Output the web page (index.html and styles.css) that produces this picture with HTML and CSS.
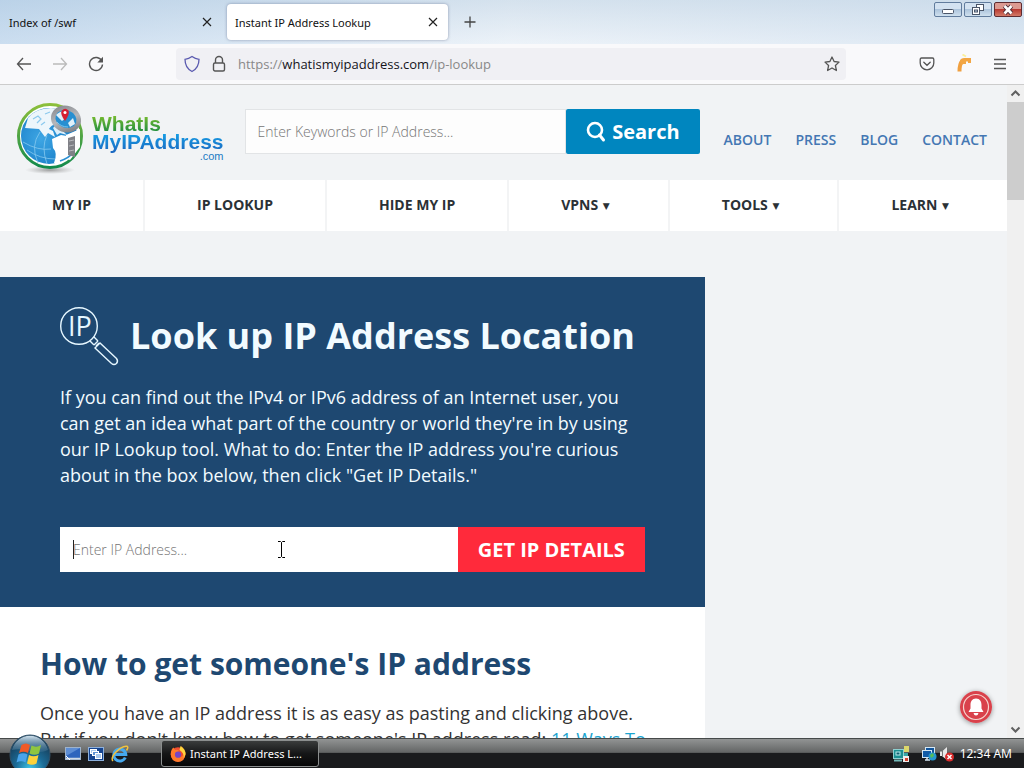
FILE: index.html
```html
<!DOCTYPE html>
<html lang="en">
<head>
    <meta charset="UTF-8">
    <meta name="viewport" content="width=device-width, initial-scale=1.0">
    <title>Instant IP Address Lookup</title>
    <link rel="stylesheet" href="styles.css">
</head>
<body>

    <!-- Tab strip -->
    <div class="tab-strip">
        <div class="tab">
            <span class="tab-title">Index of /swf</span>
            <button class="icon-btn tab-close" aria-label="Close tab">
                <svg width="10" height="10" viewBox="0 0 10 10"><path d="M1 1L9 9M9 1L1 9" stroke="#222" stroke-width="1.2"/></svg>
            </button>
        </div>
        <div class="tab active">
            <span class="tab-title">Instant IP Address Lookup</span>
            <button class="icon-btn tab-close" aria-label="Close tab">
                <svg width="10" height="10" viewBox="0 0 10 10"><path d="M1 1L9 9M9 1L1 9" stroke="#222" stroke-width="1.2"/></svg>
            </button>
        </div>
        <button class="icon-btn new-tab" aria-label="New tab">
            <svg width="12" height="12" viewBox="0 0 12 12"><path d="M6 .5V11.500M.5 6H11.500" stroke="#444" stroke-width="1.3"/></svg>
        </button>
        <div class="window-buttons">
            <button class="win-btn" aria-label="Minimize">
                <svg width="26" height="13" viewBox="0 0 26 13"><rect x="7.500" y="6.500" width="11" height="4" rx="1" fill="#fff" stroke="#4a5568"/></svg>
            </button>
            <button class="win-btn" aria-label="Restore">
                <svg width="26" height="13" viewBox="0 0 26 13"><rect x="11.500" y="1.500" width="7" height="6" fill="#fff" stroke="#4a5568"/><rect x="7.500" y="4.500" width="7" height="7" fill="#fff" stroke="#4a5568"/><rect x="9.500" y="7" width="3" height="2" fill="#b8cde2" stroke="#4a5568"/></svg>
            </button>
            <button class="win-btn win-close" aria-label="Close">
                <svg width="26" height="13" viewBox="0 0 26 13"><path d="M9.500 3L16.500 10.500M16.500 3L9.500 10.500" stroke="#4a2a35" stroke-width="4.500"/><path d="M9.500 3L16.500 10.500M16.500 3L9.500 10.500" stroke="#fff" stroke-width="2.600"/></svg>
            </button>
        </div>
    </div>

    <!-- Browser toolbar -->
    <div class="toolbar">
        <div class="nav-buttons">
            <button class="icon-btn" aria-label="Back">
                <svg width="16" height="16" viewBox="0 0 16 16"><path d="M15 8H1.500M7 2L1.500 8L7 14" fill="none" stroke="#555" stroke-width="1.300"/></svg>
            </button>
            <button class="icon-btn" aria-label="Forward">
                <svg width="16" height="16" viewBox="0 0 16 16"><path d="M1 8H14.500M9 2L14.500 8L9 14" fill="none" stroke="#bbb" stroke-width="1.300"/></svg>
            </button>
            <button class="icon-btn" aria-label="Reload">
                <svg width="16" height="16" viewBox="0 0 16 16"><path d="M13.800 5A6.500 6.500 0 1 0 14.500 8.500" fill="none" stroke="#555" stroke-width="1.400"/><path d="M15 .8V6.500H9.300Z" fill="#555"/></svg>
            </button>
        </div>
        <div class="url-bar">
            <svg width="16" height="18" viewBox="0 0 16 18"><path d="M8 1.500C10 3 12 4 15 4.300C15 10 13 14 8 16.500C3 14 1 10 1 4.300C4 4 6 3 8 1.500Z" fill="none" stroke="#5b5bb0" stroke-width="1.300"/></svg>
            <svg width="14" height="18" viewBox="0 0 14 18"><rect x="1.500" y="8" width="11" height="8" rx="1.500" fill="none" stroke="#555" stroke-width="1.400"/><path d="M3.500 8V5A3.500 3.500 0 0 1 10.500 5V8" fill="none" stroke="#555" stroke-width="1.400"/></svg>
            <span class="url">https://<b>whatismyipaddress.com</b>/ip-lookup</span>
            <svg width="16" height="16" viewBox="0 0 16 16"><path d="M8 1L10.100 5.500L15 6.100L11.400 9.500L12.400 14.500L8 12L3.600 14.500L4.600 9.500L1 6.100L5.900 5.500Z" fill="none" stroke="#555" stroke-width="1.300" stroke-linejoin="round"/></svg>
        </div>
        <div class="tool-icons">
            <button class="icon-btn" aria-label="Pocket">
                <svg width="16" height="16" viewBox="0 0 16 16"><path d="M2.500 2H13.500Q14.800 2 14.800 3.500V7A6.800 6.800 0 0 1 1.200 7V3.500Q1.200 2 2.500 2Z" fill="none" stroke="#555" stroke-width="1.300"/><path d="M4.800 6.200L8 9.300L11.200 6.200" fill="none" stroke="#555" stroke-width="1.300" stroke-linecap="round"/></svg>
            </button>
            <button class="icon-btn" aria-label="Extension">
                <svg width="16" height="20" viewBox="0 0 16 20"><path d="M3.500 17.500C3.500 13 4 9.500 6 7.500" fill="none" stroke="#f0a040" stroke-width="4"/><path d="M4 6Q6 3.500 9 4H15V9H12V7.500H10V10H7.500L5 11Z" fill="#f2a644"/><path d="M6.500 .5L10 2.500" stroke="#fbf09c" stroke-width="2"/></svg>
            </button>
            <button class="icon-btn" aria-label="Menu">
                <svg width="14" height="14" viewBox="0 0 14 14"><path d="M1 2.500H13M1 7H13M1 11.500H13" stroke="#555" stroke-width="1.300"/></svg>
            </button>
        </div>
    </div>

    <!-- Page -->
    <div class="viewport">
        <div class="page">
            <header class="site-header">
                <a class="logo" href="#">
                    <svg width="70" height="74" viewBox="0 0 70 74">
                        <defs>
                            <linearGradient id="ring" x1="0" y1="0" x2="0" y2="1"><stop offset="0" stop-color="#8cbf3b"/><stop offset="1" stop-color="#128a4c"/></linearGradient>
                            <radialGradient id="sea" cx=".35" cy=".55" r=".65"><stop offset="0" stop-color="#3ea6e4"/><stop offset="1" stop-color="#1479c4"/></radialGradient>
                            <linearGradient id="steel" x1="0" y1="0" x2="1" y2="1"><stop offset="0" stop-color="#85878c"/><stop offset=".5" stop-color="#b5b7bb"/><stop offset="1" stop-color="#77797e"/></linearGradient>
                            <radialGradient id="shade"><stop offset="0" stop-color="#777" stop-opacity=".7"/><stop offset="1" stop-color="#999" stop-opacity="0"/></radialGradient>
                        </defs>
                        <ellipse cx="34" cy="68" rx="25" ry="4" fill="url(#shade)"/>
                        <circle cx="34" cy="34" r="31.500" fill="#fff" stroke="url(#ring)" stroke-width="3"/>
                        <circle cx="33" cy="34" r="28" fill="url(#sea)"/>
                        <path d="M12 16Q20 6 35 6Q43 6 50 12L40 22Q35 23 33 27L37 29L39 35L32 31L29 35L23 27L9 26Z" fill="#edf6fb"/>
                        <path d="M17 17L22 14L25 17L21 21M29 12L34 10M25 23L29 20" fill="none" stroke="#8ccaee" stroke-width="1.200"/>
                        <path d="M37 26L41 22L47 29L51 33L44 31L41 33Z" fill="#dceffa"/>
                        <path d="M36 37L45 33L51 34V56L44 62L38 61Q42 51 37 46Z" fill="#fff"/>
                        <path d="M50 33L64 27V45L54 58L48 56Z" fill="#fff"/>
                        <path d="M44 59Q53 56 58 50" fill="none" stroke="#2a8fd2" stroke-width="1.800"/>
                        <path d="M7 40Q22 49 35 47M11 48Q24 57 39 57M22 61Q14 44 24 30M31 62Q25 45 31 33" fill="none" stroke="#86c9ef" stroke-width=".8"/>
                        <path d="M52 36L59 34V55L52 53Z" fill="#808187"/>
                        <path d="M53 39L58 38M53 44L58 43M53 49L58 48" stroke="#b8b9bd"/>
                        <ellipse cx="50" cy="17" rx="13" ry="11" fill="#278fd1" stroke="url(#steel)" stroke-width="4.500" transform="rotate(20 50 17)"/>
                        <path d="M40 13Q44 9 49 9L51 15L46 19ZM52 21L57 16L59 22L54 25Z" fill="#e1f1fa"/>
                        <path d="M41 20Q45 25 52 25" fill="none" stroke="#79c3ec"/>
                        <path d="M49 19Q44 12 45.500 9Q49 5 52.500 8.500Q54 12 49 19Z" fill="#d51f32"/>
                        <circle cx="49" cy="10.500" r="1.500" fill="#fff"/>
                    </svg>
                    <span class="logo-text">
                        <span class="logo-top">WhatIs</span>
                        <span class="logo-bottom">MyIPAddress</span>
                        <span class="logo-com">.com</span>
                    </span>
                </a>
                <form class="site-search">
                    <input type="text" aria-label="Search" placeholder="Enter Keywords or IP Address...">
                    <button type="button">
                        <svg width="20" height="22" viewBox="0 0 20 22"><circle cx="9" cy="9" r="7" fill="none" stroke="#fff" stroke-width="2.600"/><path d="M13.500 14L17.500 19" stroke="#fff" stroke-width="3" stroke-linecap="round"/></svg>
                        Search
                    </button>
                </form>
                <div class="top-links">
                    <a href="#">ABOUT</a>
                    <a href="#">PRESS</a>
                    <a href="#">BLOG</a>
                    <a href="#">CONTACT</a>
                </div>
            </header>

            <nav class="main-nav">
                <a href="#">MY IP</a>
                <a href="#">IP LOOKUP</a>
                <a href="#">HIDE MY IP</a>
                <a href="#">VPNS <span class="arrow">▼</span></a>
                <a href="#">TOOLS <span class="arrow">▼</span></a>
                <a href="#">LEARN <span class="arrow">▼</span></a>
            </nav>

            <main class="content">
                <section class="hero">
                    <div class="hero-title">
                        <svg width="60" height="60" viewBox="0 0 60 60" fill="none" stroke="#e6f7ff" stroke-width="1.400">
                            <circle cx="19" cy="19" r="18.300"/>
                            <path d="M34 30L38 34M30 34L34 38M34 38L38 34M36 39L39 36"/>
                            <path d="M35 41L40 36L56.500 51.500Q58.500 54 56.500 56.500Q54 58.500 51.500 56.500Z"/>
                            <text x="8" y="29" class="ip-mark">IP</text>
                        </svg>
                        <h1>Look up IP Address Location</h1>
                    </div>
                    <p>If you can find out the IPv4 or IPv6 address of an Internet user, you can get an idea what part of the country or world they're in by using our IP Lookup tool. What to do: Enter the IP address you're curious about in the box below, then click "Get IP Details."</p>
                    <form class="ip-form">
                        <div class="ip-field">
                            <input type="text" aria-label="IP address" placeholder="Enter IP Address...">
                            <span class="caret"></span>
                            <svg class="pointer" width="9" height="17" viewBox="0 0 9 17"><path d="M1 .5H3.500L4.500 1.500L5.500 .5H8M4.500 1.500V15.500M1 16.500H3.500L4.500 15.500L5.500 16.500H8" fill="none" stroke="#000"/></svg>
                        </div>
                        <button type="button">GET IP DETAILS</button>
                    </form>
                </section>
                <section class="article">
                    <h2>How to get someone's IP address</h2>
                    <p>Once you have an IP address it is as easy as pasting and clicking above. But if you don't know how to get someone's IP address read: <a href="#">11 Ways To</a></p>
                </section>
            </main>
        </div>
        <button class="bell" aria-label="Notifications">
            <svg width="32" height="32" viewBox="0 0 32 32"><circle cx="16" cy="16" r="16" fill="#d9414b"/><circle cx="16" cy="16" r="12.500" fill="none" stroke="#f6d5cf" stroke-width="1.200"/><path d="M16 7.500C20 7.500 21.500 10.500 21.500 14V17.500L23.500 21H8.500L10.500 17.500V14C10.500 10.500 12 7.500 16 7.500Z" fill="#fff"/><path d="M13.500 22H18.500Q18 24.500 16 24.500Q14 24.500 13.500 22Z" fill="#fff"/></svg>
        </button>
        <div class="scrollbar">
            <svg width="17" height="17" viewBox="0 0 17 17"><path d="M4.500 10.500L8.500 6.500L12.500 10.500" fill="none" stroke="#606060" stroke-width="2"/></svg>
            <div class="thumb"></div>
            <svg class="scroll-down" width="17" height="17" viewBox="0 0 17 17"><path d="M4.500 6.500L8.500 10.500L12.500 6.500" fill="none" stroke="#606060" stroke-width="2"/></svg>
        </div>
    </div>

    <!-- Taskbar -->
    <div class="taskbar">
        <button class="icon-btn start" aria-label="Start">
            <svg width="44" height="42" viewBox="0 0 44 42">
                <defs>
                    <radialGradient id="orb" cx=".5" cy=".85" r=".8"><stop offset="0" stop-color="#3fc6e8"/><stop offset=".45" stop-color="#1c6b96"/><stop offset="1" stop-color="#15364f"/></radialGradient>
                    <linearGradient id="gloss" x1="0" y1="0" x2="0" y2="1"><stop offset="0" stop-color="#d0e2ee"/><stop offset="1" stop-color="#4d7c9c" stop-opacity=".3"/></linearGradient>
                </defs>
                <circle cx="22" cy="21" r="20" fill="url(#orb)" stroke="#31526a"/>
                <path d="M4 16A18.500 18.500 0 0 1 40 16Q31 20 22 17Q12 14 4 16Z" fill="url(#gloss)"/>
                <path d="M13.500 11Q18 8 22 11L20 19Q15.500 16.500 11 19Z" fill="#ee5a28"/>
                <path d="M23.500 11.500Q28.500 14 33 11L31 19.500Q26.500 22 21.500 19.500Z" fill="#8fc640"/>
                <path d="M10.500 20.500Q15 18 19.500 20.500L17.500 28.500Q13 26 8.500 28.500Z" fill="#49a4ea"/>
                <path d="M21 21Q25.500 23.500 30.500 21L28.500 29.500Q24 32 19 29.500Z" fill="#fdd23a"/>
            </svg>
        </button>
        <div class="quick-launch">
            <button class="icon-btn" aria-label="Show desktop">
                <svg width="16" height="14" viewBox="0 0 16 14"><rect x=".5" y=".5" width="15" height="12" fill="#2f65bd" stroke="#9fb3cb"/><path d="M1 1H15L1 9Z" fill="#5d8dd4"/><path d="M1 11.500H15" stroke="#cfd9e6" stroke-width="1.500"/><path d="M1 9L5 13" stroke="#fff"/></svg>
            </button>
            <button class="icon-btn" aria-label="Switch windows">
                <svg width="16" height="14" viewBox="0 0 16 14"><rect x=".5" y=".5" width="15" height="13" fill="#16448f" stroke="#8db0dc"/><rect x="2.500" y="2.500" width="6" height="4" fill="#a9c8ee" stroke="#fff"/><rect x="4.500" y="4.500" width="6" height="4" fill="#5f93d6" stroke="#fff"/><rect x="7.500" y="6.500" width="6" height="5" fill="#a9c8ee" stroke="#fff"/></svg>
            </button>
            <button class="icon-btn" aria-label="Internet Explorer">
                <svg width="18" height="18" viewBox="0 0 18 18"><path d="M14.300 12.500A6 6 0 1 1 14.800 9.500H4" fill="none" stroke="#46a9ee" stroke-width="3"/><path d="M2 16Q-.5 13.500 4.500 7.500Q11 .5 16 1.300Q17.800 2 15.500 5.500" fill="none" stroke="#f2c33c" stroke-width="1.500"/></svg>
            </button>
        </div>
        <button class="task">
            <svg width="16" height="16" viewBox="0 0 16 16"><circle cx="8" cy="8.500" r="7.300" fill="#f04d32"/><path d="M.8 8Q1 3 3.500 1.500L5 4Q8 3 9 5L6 7.500Q7 12 11 11Q15 9 12 4L11 0Q15 3 15.500 8Q15 15 8 16Q1 15 .8 8Z" fill="#ff7a2a"/><circle cx="8" cy="8.700" r="3.100" fill="#7446c5"/><path d="M10.500 0Q15.500 3 15.500 8Q15 10.500 13.500 12Q14.500 7 9.500 4Z" fill="#ffd53d"/></svg>
            <span>Instant IP Address L...</span>
        </button>
        <div class="tray">
            <svg width="16" height="16" viewBox="0 0 16 16"><rect x=".5" y="3.500" width="10" height="9" fill="#1b8f91" stroke="#8ed0d0"/><rect x="3" y="6" width="4" height="3" fill="#0c5f70" stroke="#b9ecec"/><path d="M1 14.500H9" stroke="#72b8b8" stroke-width="2"/><rect x="11" y="0" width="5" height="6" fill="#dcd76b"/><rect x="11" y="7" width="4" height="3" fill="#36a6a6"/><rect x="10" y="10" width="6" height="6" fill="#eee"/><rect x="12" y="12" width="3" height="3" fill="#d5422f"/></svg>
            <div class="tray-pair">
                <svg width="16" height="16" viewBox="0 0 16 16"><rect x="4.500" y="1.500" width="9" height="8" fill="#11549c" stroke="#d5e8f5"/><rect x="1.500" y="4.500" width="9" height="7" fill="#125ca7" stroke="#d5e8f5"/><path d="M4 14H9M6 12V14" stroke="#d5e8f5" stroke-width="1.500"/><circle cx="11.500" cy="10.500" r="4" fill="#2598cf"/><path d="M9 9L12 7L13 10L10 12ZM13 12L15 11" fill="#56bd56"/></svg>
                <svg width="16" height="16" viewBox="0 0 16 16"><path d="M1 5.500H3L8 1V14L3 10H1Z" fill="#e8e8e8"/><path d="M3.500 5V10.500" stroke="#777"/><circle cx="10.500" cy="11" r="4.500" fill="#d92c2c"/><path d="M8.500 9L12.500 13M12.500 9L8.500 13" stroke="#fff" stroke-width="1.500"/></svg>
            </div>
            <span class="clock">12:34 AM</span>
        </div>
    </div>

</body>
</html>
```
FILE: styles.css
```css
/* General styles */
* {
    box-sizing: border-box;
}

body {
    margin: 0;
    height: 100vh;
    display: flex;
    flex-direction: column;
    overflow: hidden;
    font-family: "Open Sans", sans-serif;
    background-color: #f1f3f5;
}

a {
    text-decoration: none;
}

svg {
    display: block;
    flex: none;
}

button, input {
    font-family: inherit;
}

.icon-btn {
    padding: 0;
    border: none;
    background: none;
}

/* Tab strip */
.tab-strip {
    flex: none;
    display: flex;
    align-items: center;
    height: 44px;
    padding-left: 1px;
    background: linear-gradient(to right, rgba(170, 201, 231, 0.5), rgba(236, 242, 248, 0.3) 50%, rgba(205, 221, 237, 0.5)), linear-gradient(#cbdbe9, #edf3f9);
    font-family: "Noto Sans", sans-serif;
    font-size: 11px;
    color: #111;
}

.tab {
    display: flex;
    align-items: center;
    justify-content: space-between;
    width: 221px;
    height: 36px;
    padding: 0 10px 0 8px;
    border-radius: 4px;
}

.tab.active {
    background-color: #fff;
    box-shadow: 0 0 3px rgba(60, 70, 110, 0.5);
    margin-left: 5px;
}

.new-tab {
    margin-left: 16px;
}

.window-buttons {
    display: flex;
    gap: 2px;
    margin-left: auto;
    padding: 2px 2px 0 0;
    align-self: flex-start;
}

.win-btn {
    padding: 0;
    width: 28px;
    height: 15px;
    border: 1px solid #617c9d;
    border-radius: 2px;
    background: linear-gradient(#d3e2f1 45%, #acc4dc 50%, #cfe0ee);
}

.win-close {
    border-color: #5e2c31;
    background: linear-gradient(#dc9a91 45%, #b93b32 50%, #d37a68);
}

/* Toolbar */
.toolbar {
    flex: none;
    display: flex;
    align-items: center;
    height: 41px;
    background-color: #f9f9fb;
    border-bottom: 1px solid #ccc;
}

.nav-buttons {
    display: flex;
    gap: 20px;
    padding: 0 72px 0 16px;
}

.url-bar {
    flex: 1;
    display: flex;
    align-items: center;
    gap: 12px;
    height: 32px;
    padding: 0 6px 0 8px;
    border-radius: 4px;
    background-color: #f0f0f4;
}

.url {
    flex: 1;
    font-size: 13px;
    color: #888;
}

.url b {
    font-weight: normal;
    color: #15141a;
}

.tool-icons {
    display: flex;
    align-items: center;
    gap: 21px;
    padding: 0 17px 0 73px;
}

/* Page */
.viewport {
    flex: 1;
    min-height: 0;
    display: flex;
    position: relative;
}

.page {
    flex: 1;
    overflow: hidden;
}

.site-header {
    display: flex;
    align-items: center;
    height: 95px;
    padding: 0 20px 2px 16px;
}

.logo {
    display: flex;
    align-items: center;
    gap: 6px;
    padding-top: 14px;
}

.logo-text {
    display: flex;
    flex-direction: column;
    padding-bottom: 2px;
    font-family: "Liberation Sans", Arial, sans-serif;
    font-size: 21px;
    line-height: 18px;
    font-weight: bold;
}

.logo-top {
    color: transparent;
    background: linear-gradient(#7bbd2e, #1d8c42);
    background-clip: text;
}

.logo-bottom {
    padding-bottom: 3px;
    margin-bottom: -3px;
    color: transparent;
    background: linear-gradient(#16a0e6, #1b62bd);
    background-clip: text;
}

.logo-com {
    align-self: flex-end;
    font-size: 11px;
    line-height: 10px;
    font-weight: normal;
    color: #1b7bc4;
}

.site-search {
    flex: 1;
    display: flex;
    height: 45px;
    margin: 0 24px 0 21px;
}

.site-search input {
    flex: 1;
    min-width: 0;
    padding: 0 12px;
    border: 1px solid #e2e4e6;
    background-color: #fdfdfd;
    font-size: 14px;
}

input::placeholder {
    color: #757575;
    font-weight: 300;
    opacity: 1;
}

.site-search button {
    display: flex;
    align-items: center;
    gap: 6px;
    padding: 0 20px;
    border: none;
    border-radius: 2px;
    background-color: #0086bf;
    color: #fff;
    font-size: 20px;
    font-weight: bold;
}

.top-links {
    display: flex;
    gap: 24px;
    padding-top: 16px;
    font-size: 14px;
    font-weight: 600;
}

.top-links a {
    color: #4477b3;
}

.main-nav {
    display: flex;
    gap: 2px;
    background-color: #f3f4f5;
}

.main-nav a {
    flex: 1 1 auto;
    height: 51px;
    line-height: 49px;
    text-align: center;
    background-color: #fff;
    color: #2b3136;
    font-size: 14px;
    font-weight: bold;
}

.arrow {
    margin: 0 6px 0 1px;
    font-family: "DejaVu Sans", sans-serif;
    font-size: 9px;
    vertical-align: 1px;
}

.content {
    width: 70%;
    margin-top: 46px;
    background-color: #fff;
}

.hero {
    padding: 30px 60px 35px;
    background-color: #1e4871;
    color: #f2fbff;
}

.hero-title {
    display: flex;
    align-items: flex-start;
    gap: 10px;
}

.ip-mark {
    font-size: 27px;
    fill: #e6f7ff;
    stroke: none;
}

h1 {
    margin: 0;
    font-size: 36px;
    line-height: 58px;
    white-space: nowrap;
}

.hero p, .article p {
    margin: 0;
    font-size: 18px;
    line-height: 26px;
}

.hero p {
    padding: 17px 0 39px;
}

.ip-form {
    display: flex;
    height: 45px;
}

.ip-field {
    flex: 1;
    position: relative;
}

.ip-field input {
    width: 100%;
    height: 100%;
    padding: 0 13px;
    border: none;
    background-color: #fff;
    font-size: 14px;
}

/* Text caret and mouse pointer over the field */
.caret {
    position: absolute;
    left: 13px;
    top: 13px;
    width: 1px;
    height: 19px;
    background-color: #222;
}

.pointer {
    position: absolute;
    left: 217px;
    top: 14px;
}

.ip-form button {
    padding: 0 20px;
    border: none;
    background-color: #ff2a3b;
    color: #fff;
    font-size: 20px;
    font-weight: bold;
}

.article {
    padding: 36px 40px;
    color: #333;
}

.article h2 {
    margin: 0 0 15px;
    font-size: 30px;
    line-height: 42px;
    color: #1e4871;
}

.article a {
    color: #1ba4cf;
}

.bell {
    position: absolute;
    right: 32px;
    bottom: 15px;
    padding: 0;
    border: none;
    border-radius: 50%;
    background: none;
    box-shadow: 0 1px 5px rgba(0, 0, 0, 0.4);
}

.scrollbar {
    flex: none;
    display: flex;
    flex-direction: column;
    width: 17px;
    background-color: #f0f0f0;
}

.thumb {
    height: 98px;
    background-color: #cdcdcd;
}

.scroll-down {
    margin-top: auto;
}

/* Taskbar */
.taskbar {
    flex: none;
    position: relative;
    display: flex;
    align-items: center;
    height: 30px;
    border-top: 1px solid #464a4a;
    background: linear-gradient(#929494, #636565 46%, #1a1b1d 50%, #1a1b1d);
    color: #fff;
    font-family: "Noto Sans", sans-serif;
    font-size: 12px;
}

.start {
    align-self: flex-start;
    margin: -5px 13px 0 8px;
}

.quick-launch {
    display: flex;
    align-items: center;
    gap: 7px;
    width: 96px;
}

.task {
    display: flex;
    align-items: center;
    gap: 4px;
    width: 158px;
    height: 27px;
    padding: 0 8px;
    border: 1px solid #8b8e8e;
    border-radius: 3px;
    background: linear-gradient(#3a3c3c, #151617 50%, #060606);
    color: #fff;
    font-size: 11px;
    white-space: nowrap;
}

.tray {
    display: flex;
    align-items: center;
    gap: 12px;
    margin-left: auto;
    padding-right: 12px;
}

.tray-pair {
    display: flex;
    gap: 2px;
    margin-right: -7px;
}
```
